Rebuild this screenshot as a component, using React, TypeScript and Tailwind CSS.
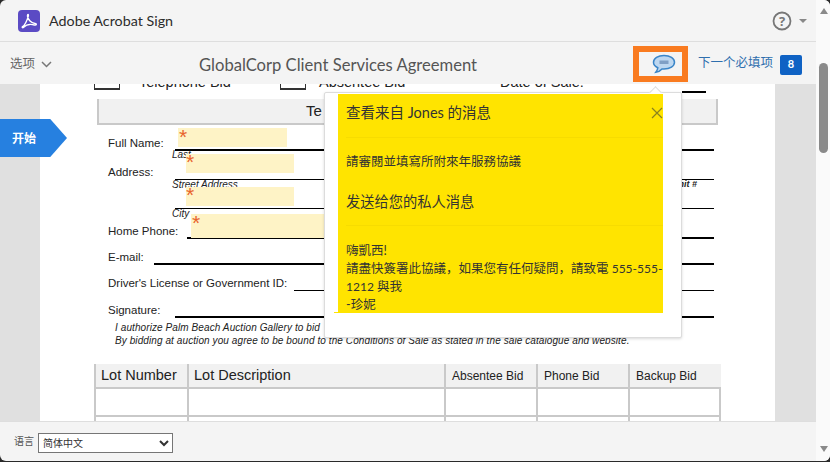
const uiFont = "font-['Lato','Noto_Sans_CJK_SC',sans-serif]";
const docFont = "font-['Liberation_Sans','Noto_Sans_CJK_SC',sans-serif]";

function FormRow({
  label,
  labelWidth,
  height,
  thick,
  sub,
  subRight,
}: {
  label?: string;
  labelWidth: string;
  height: string;
  thick?: boolean;
  sub?: string;
  subRight?: string;
}) {
  return (
    <div className={`flex items-end ${height}`}>
      <div className={`${labelWidth} mb-[1px] shrink-0 whitespace-nowrap text-[11.5px] leading-[14px] text-[#222]`}>{label}</div>
      <div className={`relative flex-1 border-b-black ${thick ? "border-b-2" : "border-b"}`}>
        {sub && (
          <span className="absolute left-[-3px] top-full text-[10px] italic leading-[11px] text-[#222]">{sub}</span>
        )}
        {subRight && (
          <span className="absolute right-[17px] top-full text-[9px] font-bold italic leading-[11px] text-[#222]">
            {subRight}
          </span>
        )}
      </div>
    </div>
  );
}

function Field({ className, starClass }: { className: string; starClass: string }) {
  return (
    <div className={`absolute bg-[#fef3c6] ${className}`}>
      <span className={`absolute text-[21px] leading-none text-[#e8622c] ${starClass}`}>*</span>
    </div>
  );
}

function HeaderCell({ children, small }: { children: string; small?: boolean }) {
  return (
    <div
      className={`flex h-[25px] items-center border-b-2 border-l-2 border-[#c9c9c9] bg-[#f1f1f1] text-[#222] ${
        small ? "pl-[6px] text-[12px]" : "pl-[5px] pt-[1px] text-[14.5px]"
      }`}
    >
      {children}
    </div>
  );
}

function BodyCell({ height }: { height: string }) {
  return <div className={`${height} border-b-2 border-l-2 border-[#c9c9c9]`} />;
}

function PdfPage() {
  return (
    <div className={`relative ml-[40px] h-[338px] w-[735px] overflow-hidden bg-white ${docFont}`}>
      {/* tail end of the previous form section, cut by the toolbar */}
      <div className="flex h-[9px] items-end pl-[54px] text-[14.5px] leading-[14px] text-[#222]">
        <div className="mb-[3px] h-[6px] w-[26px] shrink-0 border-x border-b-2 border-[#333]" />
        <div className="mb-[4px] ml-[19px] w-[141px] shrink-0">Telephone Bid</div>
        <div className="mb-[3px] h-[6px] w-[26px] shrink-0 border-x border-b-2 border-[#333]" />
        <div className="mb-[4px] ml-[13px] w-[181px] shrink-0">Absentee Bid</div>
        <div className="mb-[4px] w-[182px] shrink-0">Date of Sale:</div>
        <div className="w-[24px] border-b-2 border-black" />
      </div>

      <div className="ml-[57px] mt-[6px] flex h-[26px] w-[621px] items-center border-x-2 border-b-2 border-[#c9c9c9] bg-[#f1f1f1] pl-[207px] text-[15px] text-[#222]">
        Te<span className="ml-[3px]">lephone Bidder Information</span>
      </div>

      <div className="pl-[68px] pr-[61px]">
        <FormRow label="Full Name:" labelWidth="w-[67px]" height="h-[26px]" thick sub="Last" />
        <FormRow label="Address:" labelWidth="w-[67px]" height="h-[29px]" sub="Street Address" subRight="Unit #" />
        <FormRow labelWidth="w-[67px]" height="h-[29px]" sub="City" />
        <FormRow label="Home Phone:" labelWidth="w-[79px]" height="h-[30px]" thick />
        <FormRow label="E-mail:" labelWidth="w-[46px]" height="h-[26px]" thick />
        <FormRow label="Driver's License or Government ID:" labelWidth="w-[186px]" height="h-[26px]" />
        <FormRow label="Signature:" labelWidth="w-[67px]" height="h-[27px]" thick />
      </div>

      <div className="mt-[3px] pl-[75px] text-[10px] font-medium italic leading-[13px] tracking-[0.09px] text-[#222]">
        <p>I authorize Palm Beach Auction Gallery to bid</p>
        <p>By bidding at auction you agree to be bound to the Conditions of Sale as stated in the sale catalogue and website.</p>
      </div>

      <div className="ml-[54px] mt-[17px] grid w-[627px] grid-cols-[93px_257px_92px_92px_93px] border-r-2 border-[#c9c9c9]">
        <HeaderCell>Lot Number</HeaderCell>
        <HeaderCell>Lot Description</HeaderCell>
        <HeaderCell small>Absentee Bid</HeaderCell>
        <HeaderCell small>Phone Bid</HeaderCell>
        <HeaderCell small>Backup Bid</HeaderCell>
        <BodyCell height="h-[28px]" />
        <BodyCell height="h-[28px]" />
        <BodyCell height="h-[28px]" />
        <BodyCell height="h-[28px]" />
        <BodyCell height="h-[28px]" />
        <BodyCell height="h-[28px]" />
        <BodyCell height="h-[28px]" />
        <BodyCell height="h-[28px]" />
        <BodyCell height="h-[28px]" />
        <BodyCell height="h-[28px]" />
      </div>

      <Field className="left-[138px] top-[44px] h-[19px] w-[109px]" starClass="left-[1px] top-[-2px]" />
      <Field className="left-[146px] top-[70px] h-[19px] w-[108px]" starClass="left-[0px] top-[-3px]" />
      <Field className="left-[146px] top-[103px] h-[19px] w-[108px]" starClass="left-[0px] top-[-3px]" />
      <Field className="left-[151px] top-[130px] h-[24px] w-[135px]" starClass="left-[1px] top-[-2px]" />
    </div>
  );
}

function MessagePopover() {
  return (
    <div className={`absolute left-[324px] top-[92px] h-[246px] w-[358px] rounded-[2px] border border-[#dcdcdc] bg-white pl-[13px] pt-[1px] shadow-[0_1px_3px_rgba(0,0,0,0.15)] ${uiFont}`}>
      {/* little pointer up to the message button */}
      <div className="absolute left-[326px] top-[-5px] size-[9px] rotate-45 border-l border-t border-[#dcdcdc] bg-white" />
      <div className="relative h-[219px] w-[325px] bg-[#ffe400] pl-[8px] text-[#333]">
        <div className="flex h-[44px] items-center justify-between border-b border-[#f7dc00] pb-[6px]">
          <h2 className="text-[14.5px] leading-[20px]">查看来自 Jones 的消息</h2>
          <svg width="12" height="12" viewBox="0 0 12 12" className="mt-[1px] text-[#8a8220]">
            <path d="M1 1L11 11M11 1L1 11" stroke="currentColor" strokeWidth="1.2" fill="none" />
          </svg>
        </div>
        <p className="mt-[15px] text-[12.5px] leading-[18px]">請審閱並填寫所附來年服務協議</p>
        <div className="h-[55px] border-b border-[#f7dc00] pt-[21px]">
          <h2 className="text-[14.25px] leading-[20px]">发送给您的私人消息</h2>
        </div>
        <p className="mt-[16px] w-[317px] text-[12.5px] leading-[18px]">
          嗨凱西!
          <br />
          請盡快簽署此協議，如果您有任何疑問，請致電 <span className="text-[12px]">555-555-1212</span> 與我
          <br />
          -珍妮
        </p>
      </div>
      <div className="ml-[-4px] h-[1px] w-[4px] -translate-y-[1px] bg-[#ffe400]" />
    </div>
  );
}

export default function App() {
  return (
    <div className="h-[476px] w-[830px] bg-white">
      <div className="h-[462px] bg-[#2a2a2a]">
        <div className={`relative flex h-[461px] overflow-hidden rounded-[6px] bg-[#f4f4f4] ${uiFont}`}>
          <div className="flex w-[816px] shrink-0 flex-col">
            <header className="flex h-[42px] shrink-0 items-center border-b border-[#dedede] pl-[18px]">
              <svg width="22" height="22" viewBox="0 0 22 22">
                <rect width="22" height="22" rx="4" fill="#5b4bc4" />
                <path
                  d="M4.6 16.7C6.6 15.7 9.4 10 10.3 6.2 10.8 3.8 9.4 3.8 9.5 6.1 9.7 9 12.9 13 17 13.5 19 13.7 18.6 15.5 16.4 15 12.8 14 8.2 14.6 5.6 17.3 4.6 18.2 3.6 17.3 4.6 16.7Z"
                  fill="none"
                  stroke="#fff"
                  strokeWidth="1.4"
                  strokeLinejoin="round"
                />
              </svg>
              <span className="ml-[9px] text-[14.3px] text-[#2c2c2c]">Adobe Acrobat Sign</span>
              <svg width="20" height="20" viewBox="0 0 20 20" className="ml-auto">
                <circle cx="10" cy="10" r="8.5" fill="none" stroke="#777" strokeWidth="1.8" />
                <text x="10" y="14.5" textAnchor="middle" fontSize="13" fontWeight="700" fill="#777" fontFamily="Open Sans">
                  ?
                </text>
              </svg>
              <div className="ml-[7px] mr-[9px] h-0 w-0 border-x-[4px] border-t-[4px] border-x-transparent border-t-[#888]" />
            </header>

            <div className="flex h-[42px] shrink-0 items-center pl-[10px]">
              <span className="mt-[3px] text-[12.5px] text-[#666]">选项</span>
              <svg width="11" height="7" viewBox="0 0 11 7" className="ml-[6px] mt-[2px]">
                <path d="M1 1L5.5 5.5L10 1" fill="none" stroke="#777" strokeWidth="1.5" />
              </svg>
              <h1 className="ml-[147px] mt-[5px] text-[16.6px] text-[#555]">GlobalCorp Client Services Agreement</h1>
              <div className="ml-auto mt-[2px] flex h-[36px] w-[55px] items-center justify-center border-[6px] border-[#f97b20] pl-[8px]">
                <svg width="24" height="20" viewBox="0 0 24 20">
                  <path
                    d="M12 1.5C6 1.5 1.5 4.4 1.5 8.3 1.5 10.7 3.2 12.6 5.8 13.8 5.6 15.4 4.8 17 3.8 18.3 6.2 18 8.6 16.6 10 15 10.7 15.1 11.3 15.1 12 15.1 18 15.1 22.5 12.2 22.5 8.3 22.5 4.4 18 1.5 12 1.5Z"
                    fill="#bdd7f0"
                    stroke="#3a85c8"
                    strokeWidth="1.5"
                  />
                  <rect x="7.5" y="6.5" width="9" height="3.5" fill="#7f9fc5" />
                </svg>
              </div>
              <span className="ml-[10px] text-[12.5px] text-[#2f6fae]">下一个必填项</span>
              <div className="ml-[7px] mr-[14px] mt-[3px] flex h-[20px] w-[22px] items-center justify-center rounded-[2px] bg-[#0f62c4] text-[11px] font-bold text-white">
                8
              </div>
            </div>

            <main className="relative h-[337px] shrink-0 overflow-hidden bg-[#e0e0e0]">
              <PdfPage />
              <div className="absolute left-0 top-[35px] flex h-[38px] w-[67px] items-center bg-[#2680e0] pl-[12px] pt-[1px] text-[12px] font-bold text-white [clip-path:polygon(0_0,75%_0,100%_50%,75%_100%,0_100%)]">
                开始
              </div>
            </main>

            <footer className="flex flex-1 items-center border-t border-[#dedede] pl-[14px]">
              <label className="w-[20px] whitespace-nowrap text-[10px] text-[#555]">语言</label>
              <select className="ml-[4px] mt-[2px] h-[20px] w-[135px] rounded-none border border-[#767676] bg-white text-[10px] text-[#333]">
                <option>简体中文</option>
              </select>
            </footer>
          </div>

          <div className="flex flex-1 flex-col items-center bg-[#fafafa] pb-[9px] pl-[1px] pt-[8px]">
            <div className="h-0 w-0 border-x-[4.5px] border-b-[6px] border-x-transparent border-b-[#8a8a8a]" />
            <div className="mt-[49px] h-[90px] w-[9px] rounded-[5px] bg-[#8a8a8a]" />
            <div className="mt-auto h-0 w-0 border-x-[4.5px] border-t-[6px] border-x-transparent border-t-[#8a8a8a]" />
          </div>

          <MessagePopover />
        </div>
      </div>
    </div>
  );
}
